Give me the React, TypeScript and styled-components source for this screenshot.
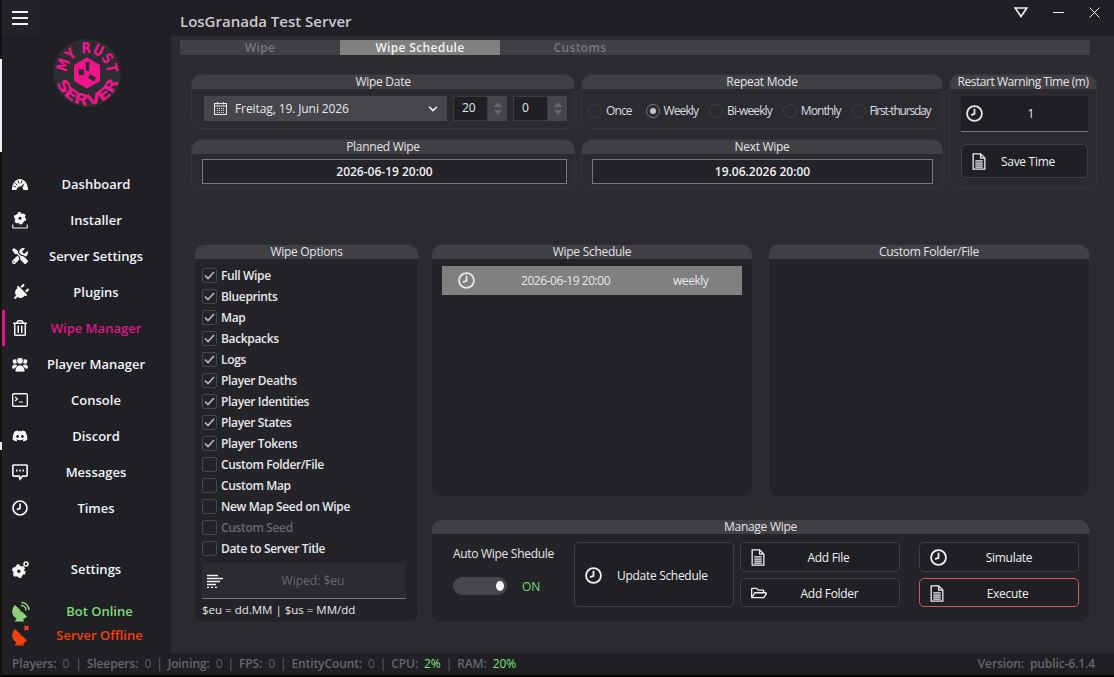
import React from 'react';
import styled, { createGlobalStyle } from 'styled-components';
import { FaDiscord, FaPlug, FaTools, FaRegFolderOpen, FaRegTrashAlt, FaChevronDown } from 'react-icons/fa';

const GlobalStyle = createGlobalStyle`
  html, body {
    margin: 0;
    padding: 0;
    background: #000;
    overflow: hidden;
  }
  * {
    box-sizing: border-box;
  }
`;

const Page = styled.div`
  width: 1114px;
  height: 677px;
  display: flex;
  font-family: 'Open Sans', 'Noto Sans', sans-serif;
  font-size: 12px;
  color: #e6e6e6;
  background: #000;
`;

const DesktopEdge = styled.div`
  width: 2px;
  background: linear-gradient(
    #111 0, #111 59px, #f0f0f0 59px, #f0f0f0 152px, #15110c 152px,
    #15110c 442px, #f0f0f0 442px, #f0f0f0 450px, #15110c 450px
  );
`;

const Window = styled.div`
  width: 1112px;
  height: 675px;
  display: flex;
  flex-direction: column;
`;

const Body = styled.div`
  flex: 1;
  display: flex;
  min-height: 0;
`;

const Sidebar = styled.nav`
  width: 169px;
  background: #1f1f24;
  display: flex;
  flex-direction: column;
`;

const Burger = styled.div`
  width: 38px;
  height: 36px;
  background: #222227;
  padding: 11px 0 0 10px;
  display: flex;
  flex-direction: column;
  gap: 4px;
  & > i {
    display: block;
    width: 16px;
    height: 2px;
    background: #f2f2f2;
  }
`;

const LogoBox = styled.div`
  height: 130px;
  padding: 2px 0 0 50px;
`;

const NavRow = styled.div<{ $active?: boolean; $status?: string }>`
  height: ${p => (p.$status ? '24px' : '36px')};
  display: flex;
  align-items: center;
  padding-right: 18px;
  border-left: 3px solid ${p => (p.$active ? '#e0168a' : 'transparent')};
  color: ${p => p.$status || (p.$active ? '#e0168a' : '#f1f4fa')};
  font-size: 13px;
  font-weight: 600;
`;

const NavIcon = styled.span`
  width: 34px;
  padding-left: 7px;
  display: flex;
  align-items: center;
  color: #f4f4f4;
  svg {
    display: block;
  }
`;

const NavLabel = styled.span<{ $shift?: boolean }>`
  flex: 1;
  text-align: center;
  white-space: nowrap;
  margin-left: ${p => (p.$shift ? '7px' : '0')};
`;

const SettingsGroup = styled.div`
  margin-top: 25px;
`;

const StatusGroup = styled.div`
  margin-top: 12px;
`;

const Main = styled.main`
  flex: 1;
  display: flex;
  flex-direction: column;
  min-width: 0;
`;

const TitleBar = styled.header`
  height: 36px;
  background: #1f1f24;
  display: flex;
  align-items: center;
  padding: 6px 0 0 9px;
  font-size: 15px;
  font-weight: 600;
  color: #c9c9ce;
`;

const TitleText = styled.span`
  flex: 1;
`;

const WindowButtons = styled.div`
  display: flex;
  align-items: center;
  gap: 25px;
  padding: 0 14px 18px 0;
  svg {
    display: block;
  }
`;

const Content = styled.div`
  flex: 1;
  background: #2a2a2f;
  padding: 4px 0 0 9px;
  display: flex;
  flex-direction: column;
`;

const TabBar = styled.div`
  width: 910px;
  height: 15px;
  background: #3f3f44;
  display: flex;
`;

const Tab = styled.div<{ $active?: boolean }>`
  width: 160px;
  text-align: center;
  font-size: 12px;
  line-height: 15px;
  font-weight: 600;
  letter-spacing: 0.35px;
  background: ${p => (p.$active ? '#808080' : 'transparent')};
  color: ${p => (p.$active ? '#f2f2f2' : '#77777c')};
`;

const TopGrid = styled.section`
  margin: 19px 0 0 11px;
  display: grid;
  grid-template-columns: 384px 362px 148px;
  grid-template-rows: 55px 50px;
  column-gap: 6px;
  row-gap: 10px;
`;

const Panel = styled.div<{ $dark?: boolean; $tall?: boolean; $wide?: boolean }>`
  border: 1px solid ${p => (p.$dark ? '#2e2e33' : '#333338')};
  border-radius: 10px;
  background: ${p => (p.$dark ? '#232328' : 'transparent')};
  display: flex;
  flex-direction: column;
  overflow: hidden;
  grid-row: ${p => (p.$tall ? 'span 2' : 'auto')};
  grid-column: ${p => (p.$wide ? 'span 2' : 'auto')};
`;

const PanelHead = styled.div<{ $tight?: boolean }>`
  height: 15px;
  flex: none;
  margin: -1px -1px 0;
  background: #3f3f44;
  text-align: center;
  font-size: 12px;
  line-height: 15px;
  letter-spacing: ${p => (p.$tight ? '-0.45px' : '-0.28px')};
  color: #e4e4e8;
  white-space: nowrap;
`;

const DateRow = styled.div`
  display: flex;
  gap: 6px;
  padding: 7px 7px 0 12px;
`;

const DatePicker = styled.div`
  width: 243px;
  height: 25px;
  background: #45454a;
  display: flex;
  align-items: center;
  padding: 0 9px 0 10px;
  gap: 8px;
  font-size: 12px;
  letter-spacing: -0.1px;
  color: #e8e8ec;
  svg {
    display: block;
  }
`;

const DateText = styled.span`
  flex: 1;
`;

const Spinner = styled.div`
  width: 54px;
  height: 25px;
  background: #45454a;
  display: flex;
  align-items: stretch;
`;

const SpinnerValue = styled.div`
  width: 35px;
  background: #1f1f24;
  border: 1px solid #3a3a3f;
  padding-left: 8px;
  line-height: 22px;
  font-size: 12px;
`;

const SpinnerArrows = styled.div`
  flex: 1;
  display: flex;
  flex-direction: column;
  align-items: center;
  justify-content: center;
  gap: 3px;
`;

const Arrow = styled.i<{ $up?: boolean }>`
  width: 0;
  height: 0;
  border-left: 4px solid transparent;
  border-right: 4px solid transparent;
  border-bottom: ${p => (p.$up ? '5px solid #66666b' : '0')};
  border-top: ${p => (p.$up ? '0' : '5px solid #66666b')};
`;

const RadioRow = styled.div`
  display: flex;
  gap: 11px;
  padding: 13px 0 0 6px;
`;

const RadioItem = styled.label`
  display: flex;
  align-items: center;
  gap: 4px;
  font-size: 12px;
  letter-spacing: -0.9px;
  color: #dcdce0;
  white-space: nowrap;
  &:first-child {
    margin-right: 3px;
  }
  &:last-child {
    letter-spacing: -1.2px;
  }
`;

const RadioDot = styled.span<{ $on?: boolean }>`
  width: 14px;
  height: 14px;
  border-radius: 50%;
  border: 1px solid ${p => (p.$on ? '#77777c' : '#3f3f44')};
  display: flex;
  align-items: center;
  justify-content: center;
  &::after {
    content: '';
    width: 6px;
    height: 6px;
    border-radius: 50%;
    background: ${p => (p.$on ? '#c8c8cc' : 'transparent')};
  }
`;

const ValueBox = styled.div<{ $left: number; $right: number }>`
  margin: 5px ${p => p.$right}px 0 ${p => p.$left}px;
  height: 25px;
  border: 1px solid #77777c;
  background: #232328;
  text-align: center;
  font-size: 12px;
  font-weight: 600;
  line-height: 23px;
  color: #f0f0f4;
`;

const TimeInput = styled.div`
  margin: 7px 8px 0 11px;
  height: 36px;
  background: #1f1f24;
  border-bottom: 1px solid #77777c;
  display: flex;
  align-items: center;
  padding-left: 5px;
  font-size: 12px;
  svg {
    display: block;
  }
`;

const TimeValue = styled.span`
  flex: 1;
  text-align: center;
  padding-right: 9px;
`;

const Button = styled.div<{ $danger?: boolean; $h: number }>`
  height: ${p => p.$h}px;
  border: 1px solid ${p => (p.$danger ? '#d9535f' : '#3f3f44')};
  border-radius: 5px;
  background: #1f1f24;
  display: flex;
  align-items: center;
  padding: 1px 0 0 10px;
  font-size: 12px;
  letter-spacing: -0.3px;
  color: #f0f0f4;
  svg {
    display: block;
    flex: none;
  }
`;

const ButtonText = styled.span<{ $left?: boolean }>`
  flex: 1;
  text-align: ${p => (p.$left ? 'left' : 'center')};
  padding-left: ${p => (p.$left ? '15px' : '0')};
  padding-right: ${p => (p.$left ? '0' : '7px')};
  white-space: nowrap;
`;

const SaveSlot = styled.div`
  margin: 12px 8px 0 11px;
`;

const LowerRow = styled.section`
  margin: 55px 0 0 14px;
  display: flex;
  gap: 12px;
`;

const OptionsPanel = styled(Panel)`
  width: 225px;
  height: 379px;
`;

const OptionList = styled.div`
  padding: 6px 0 0 7px;
`;

const OptionRow = styled.div<{ $disabled?: boolean }>`
  height: 21px;
  display: flex;
  align-items: center;
  gap: 4px;
  font-size: 12px;
  font-weight: 600;
  letter-spacing: -0.35px;
  color: ${p => (p.$disabled ? '#68686d' : '#e8e8ec')};
  white-space: nowrap;
`;

const CheckBox = styled.span`
  width: 15px;
  height: 15px;
  border: 1px solid #45454a;
  border-radius: 2px;
  display: flex;
  align-items: center;
  justify-content: center;
  svg {
    display: block;
  }
`;

const TitleInput = styled.div`
  margin: 4px 12px 0 7px;
  height: 36px;
  background: #2a2a2f;
  border-bottom: 1px solid #77777c;
  display: flex;
  align-items: center;
  padding-left: 5px;
  color: #68686d;
  font-size: 12px;
  svg {
    display: block;
  }
`;

const TitleInputText = styled.span`
  flex: 1;
  text-align: center;
  padding-right: 3px;
`;

const FormatHint = styled.div`
  margin: 3px 0 0 7px;
  font-size: 11.5px;
  color: #e8e8ec;
`;

const RightGrid = styled.div`
  display: grid;
  grid-template-columns: 322px 322px;
  grid-template-rows: 253px 104px;
  column-gap: 15px;
  row-gap: 22px;
`;

const ScheduleItem = styled.div`
  margin: 7px 10px 0;
  height: 29px;
  background: #808080;
  display: flex;
  align-items: center;
  padding-left: 16px;
  color: #e6e6ea;
  font-size: 12px;
  letter-spacing: -0.45px;
  svg {
    display: block;
  }
`;

const ScheduleDate = styled.span`
  margin-left: 46px;
  width: 152px;
`;

const ManageBody = styled.div`
  display: flex;
  padding: 8px 0 0 11px;
`;

const AutoWipe = styled.div`
  width: 120px;
  padding-left: 10px;
  display: flex;
  flex-direction: column;
`;

const AutoLabel = styled.div`
  font-size: 12px;
  line-height: 24px;
  letter-spacing: -0.3px;
  white-space: nowrap;
`;

const ToggleRow = styled.div`
  margin-top: 11px;
  display: flex;
  align-items: center;
  gap: 15px;
  color: #6fdc6f;
`;

const Toggle = styled.div`
  width: 54px;
  height: 18px;
  border-radius: 9px;
  background: #46464b;
  display: flex;
  justify-content: flex-end;
  align-items: center;
  padding-right: 3px;
  &::after {
    content: '';
    width: 8px;
    height: 10px;
    border-radius: 50%;
    background: #f6f6f6;
  }
`;

const ButtonColumn = styled.div<{ $gap?: number }>`
  width: 160px;
  margin-left: ${p => p.$gap ?? 6}px;
  display: flex;
  flex-direction: column;
  gap: 6px;
`;

const StatusBar = styled.footer`
  height: 22px;
  background: #1f1f24;
  display: flex;
  align-items: center;
  padding: 0 19px 2px 10px;
  font-size: 12px;
  font-weight: 600;
  letter-spacing: -0.1px;
  color: #66666b;
  white-space: nowrap;
`;

const Stat = styled.span`
  display: flex;
  gap: 6px;
  &:first-child {
    margin-right: 1px;
  }
`;

const StatValue = styled.span<{ $good?: boolean }>`
  font-weight: 400;
  color: ${p => (p.$good ? '#7fe67f' : '#5f5f64')};
`;

const Pipe = styled.span`
  margin: 0 5px;
  font-weight: 400;
`;

const Version = styled.span`
  margin-left: auto;
`;

const ClockIcon: React.FC<{ size?: number }> = ({ size = 17 }) => (
  <svg width={size} height={size} viewBox="0 0 16 16" fill="none" stroke="currentColor">
    <circle cx="8" cy="8" r="7" strokeWidth="1.7" />
    <path d="M8 3.600V8.400L4.800 9.600" strokeWidth="1.700" />
  </svg>
);

const FileIcon: React.FC = () => (
  <svg width="14" height="17" viewBox="0 0 13 16" fill="none" stroke="currentColor" strokeWidth="1.200">
    <path d="M1 .8H8L12 4.800V15.200H1Z" />
    <path d="M8 .8V4.800H12" />
    <path d="M3 7.500H10M3 9.500H10M3 11.500H10M3 13.200H10" />
  </svg>
);

const GaugeIcon: React.FC = () => (
  <svg width="16" height="11" viewBox="0 0 16 11" fill="currentColor">
    <path d="M0 11C-.3 5 3.500 0 8 0s8.300 5 8 11H11.500L10.500 8.500 12.800 4 8.800 7.600 7 7.500 4.800 9.600 4.500 11Z" />
    <path d="M3 3.600 5 6M6 1.500 7 4.500M10 1.500 9 4.500M1.500 7 4 8" stroke="#1f1f24" strokeWidth=".9" />
  </svg>
);

const Gear: React.FC<{ cx: number; cy: number; r: number }> = ({ cx, cy, r }) => (
  <g fill="none" stroke="currentColor">
    <circle cx={cx} cy={cy} r={r * 0.55} strokeWidth={r * 0.6} />
    <circle cx={cx} cy={cy} r={r * 0.88} strokeWidth={r * 0.26} strokeDasharray={`${r * 0.46} ${r * 0.46}`} />
  </g>
);

const InstallerIcon: React.FC = () => (
  <svg width="16" height="17" viewBox="0 0 16 17">
    <Gear cx={8} cy={6.200} r={6.200} />
    <path d="M.7 12.500V15a1 1 0 0 0 1 1H14.300a1 1 0 0 0 1-1V12.500" fill="none" stroke="currentColor" strokeWidth="1.100" />
  </svg>
);

const SettingsIcon: React.FC = () => (
  <svg width="17" height="17" viewBox="0 0 17 17">
    <Gear cx={6.800} cy={10.200} r={6.800} />
    <circle cx="14" cy="3" r="2" fill="none" stroke="currentColor" strokeWidth="1.500" />
  </svg>
);

const PlayersIcon: React.FC = () => (
  <svg width="16" height="15" viewBox="0 0 16 15" fill="currentColor">
    <circle cx="2.900" cy="4.500" r="2.300" />
    <circle cx="13.100" cy="4.500" r="2.300" />
    <path d="M0 11.500C0 8.500 1 7.500 3 7.500S6 8.500 6 11.500ZM10 11.500C10 8.500 11 7.500 13 7.500S16 8.500 16 11.500Z" />
    <circle cx="8" cy="3.800" r="3.400" stroke="#1f1f24" strokeWidth=".8" />
    <path d="M3 15C3 10.500 5 8 8 8S13 10.500 13 15Z" stroke="#1f1f24" strokeWidth=".8" />
  </svg>
);

const ConsoleIcon: React.FC = () => (
  <svg width="16" height="14" viewBox="0 0 16 14" fill="none" stroke="currentColor">
    <rect x=".7" y=".7" width="14.600" height="12.600" rx="1" strokeWidth="1.400" />
    <path d="M3 4 5.500 6 3 8M7 9H11" strokeWidth="1.200" />
  </svg>
);

const MessageIcon: React.FC = () => (
  <svg width="16" height="17" viewBox="0 0 16 17" fill="none">
    <path d="M2 1H14a1.200 1.200 0 0 1 1.200 1.200V11a1.200 1.200 0 0 1-1.200 1.200H10.500L8 15 7.300 12.200H2A1.200 1.200 0 0 1 .8 11V2.200A1.200 1.200 0 0 1 2 1Z" stroke="currentColor" strokeWidth="1.700" />
    <path d="M4 6.500H5.500M7.300 6.500H8.800M10.500 6.500H12" stroke="currentColor" strokeWidth="1.800" />
  </svg>
);

const DishIcon: React.FC<{ color: string; offline?: boolean }> = ({ color, offline }) => (
  <svg width="18" height="21" viewBox="0 0 18 21" fill="none">
    <path d="M3 5 14 15.500A7.500 7.500 0 0 1 3 5Z" fill={color} stroke={color} strokeWidth="1.500" />
    <path d="M2.500 20.500H12.500L9.500 16H5.500Z" fill={color} />
    <path d="M8.500 10.500 12 7" stroke="#1f1f24" strokeWidth="1.300" />
    {offline ? (
      <path d="M12.500 1 16.500 5M16.500 1 12.500 5" stroke={color} strokeWidth="1.800" />
    ) : (
      <path d="M9 4.500A4.500 4.500 0 0 1 14 9.500M9.500 1.500A7.500 7.500 0 0 1 17 9" stroke={color} strokeWidth="1.500" />
    )}
  </svg>
);

const Logo: React.FC = () => (
  <svg width="70" height="70" viewBox="0 0 70 70" overflow="visible">
    <defs>
      <path id="logoTop" d="M35 55A20 20 0 1 1 35.010 55" />
      <path id="logoBottom" d="M35 3A32 32 0 1 0 35.010 3" />
    </defs>
    <circle cx="35" cy="35" r="34" fill="#2d2d31" />
    <text fontFamily="'DejaVu Sans', sans-serif" fontWeight="700" fontSize="15" fill="#f0148c">
      <textPath href="#logoTop" startOffset="31.400" textLength="63" lengthAdjust="spacingAndGlyphs">
        MY RUST
      </textPath>
    </text>
    <text fontFamily="'DejaVu Sans', sans-serif" fontWeight="700" fontSize="15" fill="#f0148c">
      <textPath href="#logoBottom" startOffset="60" textLength="82" lengthAdjust="spacingAndGlyphs">
        SERVER
      </textPath>
    </text>
    <path d="M35 19.500 48 27V43L35 50.500 22 43V27Z" fill="#f0148c" />
    <path d="M33.500 24H37.500L37 33H34ZM26.500 31.500H32V37H27ZM38 36 44 40 42 43.500 36 40Z" fill="#2d2d31" />
  </svg>
);

const navItems: { label: string; icon: React.ReactNode; active?: boolean }[] = [
  { label: 'Dashboard', icon: <GaugeIcon /> },
  { label: 'Installer', icon: <InstallerIcon /> },
  { label: 'Server Settings', icon: <FaTools size={16} /> },
  { label: 'Plugins', icon: <FaPlug size={17} style={{ transform: 'rotate(45deg)' }} /> },
  { label: 'Wipe Manager', icon: <FaRegTrashAlt size={16} />, active: true },
  { label: 'Player Manager', icon: <PlayersIcon /> },
  { label: 'Console', icon: <ConsoleIcon /> },
  { label: 'Discord', icon: <FaDiscord size={16} /> },
  { label: 'Messages', icon: <MessageIcon /> },
  { label: 'Times', icon: <ClockIcon size={16} /> },
];

const repeatModes = ['Once', 'Weekly', 'Bi-weekly', 'Monthly', 'First-thursday'];

const wipeOptions = [
  { label: 'Full Wipe', on: true },
  { label: 'Blueprints', on: true },
  { label: 'Map', on: true },
  { label: 'Backpacks', on: true },
  { label: 'Logs', on: true },
  { label: 'Player Deaths', on: true },
  { label: 'Player Identities', on: true },
  { label: 'Player States', on: true },
  { label: 'Player Tokens', on: true },
  { label: 'Custom Folder/File' },
  { label: 'Custom Map' },
  { label: 'New Map Seed on Wipe' },
  { label: 'Custom Seed', disabled: true },
  { label: 'Date to Server Title' },
];

const stats: { name: string; value: string; good?: boolean }[] = [
  { name: 'Players:', value: '0' },
  { name: 'Sleepers:', value: '0' },
  { name: 'Joining:', value: '0' },
  { name: 'FPS:', value: '0' },
  { name: 'EntityCount:', value: '0' },
  { name: 'CPU:', value: '2%', good: true },
  { name: 'RAM:', value: '20%', good: true },
];

const App: React.FC = () => {
  return (
    <Page>
      <GlobalStyle />
      <DesktopEdge />
      <Window>
        <Body>
          <Sidebar>
            <Burger>
              <i />
              <i />
              <i />
            </Burger>
            <LogoBox>
              <Logo />
            </LogoBox>
            {navItems.map(item => (
              <NavRow key={item.label} $active={item.active}>
                <NavIcon>{item.icon}</NavIcon>
                <NavLabel>{item.label}</NavLabel>
              </NavRow>
            ))}
            <SettingsGroup>
              <NavRow>
                <NavIcon>
                  <SettingsIcon />
                </NavIcon>
                <NavLabel>Settings</NavLabel>
              </NavRow>
            </SettingsGroup>
            <StatusGroup>
              <NavRow $status="#7ddc7a">
                <NavIcon>
                  <DishIcon color="#8fd07f" />
                </NavIcon>
                <NavLabel $shift>Bot Online</NavLabel>
              </NavRow>
              <NavRow $status="#f0420f">
                <NavIcon>
                  <DishIcon color="#f0420f" offline />
                </NavIcon>
                <NavLabel $shift>Server Offline</NavLabel>
              </NavRow>
            </StatusGroup>
          </Sidebar>
          <Main>
            <TitleBar>
              <TitleText>LosGranada Test Server</TitleText>
              <WindowButtons>
                <svg width="14" height="11" viewBox="0 0 14 11" fill="none" stroke="#f0f0f0" strokeWidth="1.600">
                  <path d="M1.200 1H12.800L7 9.500Z" />
                </svg>
                <svg width="11" height="11" viewBox="0 0 11 11" stroke="#f0f0f0" strokeWidth="1">
                  <path d="M0 5.500H11" />
                </svg>
                <svg width="11" height="11" viewBox="0 0 11 11" stroke="#f0f0f0" strokeWidth="1">
                  <path d="M.5.500 10.500 10.500M10.500.500.500 10.500" />
                </svg>
              </WindowButtons>
            </TitleBar>
            <Content>
              <TabBar>
                <Tab>Wipe</Tab>
                <Tab $active>Wipe Schedule</Tab>
                <Tab>Customs</Tab>
              </TabBar>
              <TopGrid>
                <Panel>
                  <PanelHead>Wipe Date</PanelHead>
                  <DateRow>
                    <DatePicker>
                      <svg width="13" height="13" viewBox="0 0 13 13" fill="none" stroke="#e8e8ec">
                        <rect x=".5" y="1.500" width="12" height="11" />
                        <path d="M.5 4H12.500M3.500 0V2.500M9.500 0V2.500" />
                        <path d="M3 6.500H10M3 8.500H10M3 10.500H10" strokeDasharray="1 1" />
                      </svg>
                      <DateText>Freitag, 19. Juni 2026</DateText>
                      <FaChevronDown size={10} />
                    </DatePicker>
                    <Spinner>
                      <SpinnerValue>20</SpinnerValue>
                      <SpinnerArrows>
                        <Arrow $up />
                        <Arrow />
                      </SpinnerArrows>
                    </Spinner>
                    <Spinner>
                      <SpinnerValue>0</SpinnerValue>
                      <SpinnerArrows>
                        <Arrow $up />
                        <Arrow />
                      </SpinnerArrows>
                    </Spinner>
                  </DateRow>
                </Panel>
                <Panel>
                  <PanelHead>Repeat Mode</PanelHead>
                  <RadioRow>
                    {repeatModes.map(mode => (
                      <RadioItem key={mode}>
                        <RadioDot $on={mode === 'Weekly'} />
                        {mode}
                      </RadioItem>
                    ))}
                  </RadioRow>
                </Panel>
                <Panel $tall>
                  <PanelHead $tight>Restart Warning Time (m)</PanelHead>
                  <TimeInput>
                    <ClockIcon />
                    <TimeValue>1</TimeValue>
                  </TimeInput>
                  <SaveSlot>
                    <Button $h={34}>
                      <FileIcon />
                      <ButtonText $left>Save Time</ButtonText>
                    </Button>
                  </SaveSlot>
                </Panel>
                <Panel>
                  <PanelHead>Planned Wipe</PanelHead>
                  <ValueBox $left={10} $right={7}>2026-06-19 20:00</ValueBox>
                </Panel>
                <Panel>
                  <PanelHead>Next Wipe</PanelHead>
                  <ValueBox $left={10} $right={9}>19.06.2026 20:00</ValueBox>
                </Panel>
              </TopGrid>
              <LowerRow>
                <OptionsPanel $dark>
                  <PanelHead>Wipe Options</PanelHead>
                  <OptionList>
                    {wipeOptions.map(option => (
                      <OptionRow key={option.label} $disabled={option.disabled}>
                        <CheckBox>
                          {option.on && (
                            <svg width="11" height="9" viewBox="0 0 11 9" fill="none" stroke="#b8b8bc" strokeWidth="1.700">
                              <path d="M1 4.500 4 7.500 10 1" />
                            </svg>
                          )}
                        </CheckBox>
                        {option.label}
                      </OptionRow>
                    ))}
                  </OptionList>
                  <TitleInput>
                    <svg width="16" height="14" viewBox="0 0 16 14" stroke="#f4f4f4" strokeWidth="1.300">
                      <path d="M0 1.500H11M0 4.500H16M0 7.500H13M0 10.500H9" />
                      <path d="M0 13.500H12" strokeDasharray="2 2" />
                    </svg>
                    <TitleInputText>Wiped: $eu</TitleInputText>
                  </TitleInput>
                  <FormatHint>$eu = dd.MM | $us = MM/dd</FormatHint>
                </OptionsPanel>
                <RightGrid>
                  <Panel $dark>
                    <PanelHead>Wipe Schedule</PanelHead>
                    <ScheduleItem>
                      <ClockIcon />
                      <ScheduleDate>2026-06-19 20:00</ScheduleDate>
                      <span>weekly</span>
                    </ScheduleItem>
                  </Panel>
                  <Panel $dark>
                    <PanelHead>Custom Folder/File</PanelHead>
                  </Panel>
                  <Panel $dark $wide>
                    <PanelHead>Manage Wipe</PanelHead>
                    <ManageBody>
                      <AutoWipe>
                        <AutoLabel>Auto Wipe Shedule</AutoLabel>
                        <ToggleRow>
                          <Toggle />
                          ON
                        </ToggleRow>
                      </AutoWipe>
                      <ButtonColumn $gap={11}>
                        <Button $h={65}>
                          <ClockIcon />
                          <ButtonText $left>Update Schedule</ButtonText>
                        </Button>
                      </ButtonColumn>
                      <ButtonColumn>
                        <Button $h={30}>
                          <FileIcon />
                          <ButtonText>Add File</ButtonText>
                        </Button>
                        <Button $h={29}>
                          <FaRegFolderOpen size={16} />
                          <ButtonText>Add Folder</ButtonText>
                        </Button>
                      </ButtonColumn>
                      <ButtonColumn $gap={19}>
                        <Button $h={30}>
                          <ClockIcon />
                          <ButtonText>Simulate</ButtonText>
                        </Button>
                        <Button $h={29} $danger>
                          <FileIcon />
                          <ButtonText>Execute</ButtonText>
                        </Button>
                      </ButtonColumn>
                    </ManageBody>
                  </Panel>
                </RightGrid>
              </LowerRow>
            </Content>
          </Main>
        </Body>
        <StatusBar>
          {stats.map((stat, i) => (
            <React.Fragment key={stat.name}>
              {i > 0 && <Pipe>|</Pipe>}
              <Stat>
                {stat.name}
                <StatValue $good={stat.good}>{stat.value}</StatValue>
              </Stat>
            </React.Fragment>
          ))}
          <Version>Version:&nbsp; public-6.1.4</Version>
        </StatusBar>
      </Window>
    </Page>
  );
};

export default App;
